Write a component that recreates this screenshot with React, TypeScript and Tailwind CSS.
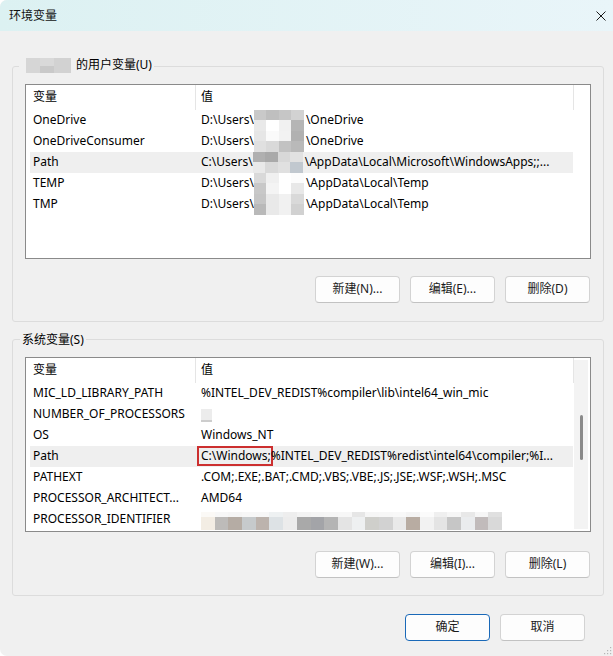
import React from "react"

type Row = { name: string; value: React.ReactNode; active?: boolean }

const ui = "font-['Segoe_UI','Noto_Sans','Microsoft_YaHei','Noto_Sans_CJK_SC',sans-serif]"

// redacted user name, 4 columns x 2 bands per row
const userMosaic = [
  ["#c9c9c9", "#bfbfbf", "#c6c6c6", "#d2d2d2", "#e9e9e9", "#ffffff", "#f1f1f1", "#b5b5b5"],
  ["#e6e6e6", "#fafafa", "#f2f2f2", "#b1b1b1", "#e0e0e0", "#d9d9d9", "#c2c2c2", "#b9b9b9"],
  ["#b0b0b0", "#a9a9a9", "#d8d8d8", "#e1e1e1", "#e9e9e9", "#d9d9d9", "#e0e0e0", "#c1c8cf"],
  ["#d9d9d9", "#f0f0f0", "#ffffff", "#fcfcfc", "#c8c8c8", "#f4f4f4", "#ffffff", "#e8e8e8"],
  ["#c5c5c5", "#e9e9e9", "#f1f1f1", "#d9d9d9", "#b9b9b9", "#e9e9e9", "#f1f1f1", "#d1d1d1"],
]

const idMosaic = [
  ["#fbf9f6", "#f3ede4"], ["#f7f7f7", "#bdbbb9"], ["#f5f5f5", "#b5aca4"], ["#f7f7f7", "#c6cacc"],
  ["#f7f7f7", "#bcb3ad"], ["#eef1f2", "#dde2e5"], ["#eeeeee", "#ececec"], ["#f3f3f3", "#a9a9a9"],
  ["#f5f5f5", "#a3a4a8"], ["#f6f6f6", "#b4b4b4"], ["#f7f7f7", "#e4e4e4"], ["#e6e6e6", "#eef0f1"],
  ["#f6f6f6", "#cfcfcb"], ["#f7f7f7", "#d2d2d2"], ["#f8f8f8", "#e9e9e9"], ["#f4f4f4", "#b8aca2"],
  ["#fbfbfb", "#f2f2f2"], ["#efefef", "#e4e4e4"], ["#f6f6f6", "#c6c6c6"], ["#e8e8e8", "#eaecee"],
  ["#f6f6f6", "#c1bbbb"], ["#e0e0e0", "#d9d9d9"],
]

function UserMosaic({ i }: { i: number }) {
  return (
    <div className="grid grid-cols-4 grid-rows-2 w-[50px] h-full shrink-0">
      {userMosaic[i].map((c, k) => (
        <div key={k} style={{ backgroundColor: c }} />
      ))}
    </div>
  )
}

function UserPath({ drive, i, tail }: { drive: string; i: number; tail: string }) {
  return (
    <>
      <span>{drive + ":\\Users\\"}</span>
      <UserMosaic i={i} />
      <span className="pl-[2px]">{tail}</span>
    </>
  )
}

const userRows: Row[] = [
  { name: "OneDrive", value: <UserPath drive="D" i={0} tail={"\\OneDrive"} /> },
  { name: "OneDriveConsumer", value: <UserPath drive="D" i={1} tail={"\\OneDrive"} /> },
  {
    name: "Path",
    value: <UserPath drive="C" i={2} tail={"\\AppData\\Local\\Microsoft\\WindowsApps;;..."} />,
    active: true,
  },
  { name: "TEMP", value: <UserPath drive="D" i={3} tail={"\\AppData\\Local\\Temp"} /> },
  { name: "TMP", value: <UserPath drive="D" i={4} tail={"\\AppData\\Local\\Temp"} /> },
]

const systemRows: Row[] = [
  { name: "MIC_LD_LIBRARY_PATH", value: "%INTEL_DEV_REDIST%compiler\\lib\\intel64_win_mic" },
  {
    name: "NUMBER_OF_PROCESSORS",
    value: <span className="inline-block w-[11px] h-[13px] mt-[2px] bg-[#ececec] border-b-2 border-[#cdcdcd]" />,
  },
  { name: "OS", value: "Windows_NT" },
  {
    name: "Path",
    value: (
      <>
        <span className="inline-block -ml-[4px] pl-[2px] -mr-[2px] border-2 border-[#cc2f2f] leading-[16px]">
          {"C:\\Windows;"}
        </span>
        <span>{"%INTEL_DEV_REDIST%redist\\intel64\\compiler;%I..."}</span>
      </>
    ),
    active: true,
  },
  { name: "PATHEXT", value: ".COM;.EXE;.BAT;.CMD;.VBS;.VBE;.JS;.JSE;.WSF;.WSH;.MSC" },
  { name: "PROCESSOR_ARCHITECT...", value: "AMD64" },
  {
    name: "PROCESSOR_IDENTIFIER",
    value: (
      <div className="flex h-[18px] mt-[3px]">
        {idMosaic.map(([top, main], k) => (
          <div key={k} className="flex flex-col w-[13.7px]">
            <div className="h-[5px]" style={{ backgroundColor: top }} />
            <div className="flex-1" style={{ backgroundColor: main }} />
          </div>
        ))}
      </div>
    ),
  },
]

function ListView({ rows, scroll }: { rows: Row[]; scroll?: boolean }) {
  return (
    <div className="h-[175px] w-[566px] border border-[#8a8a8a] bg-white flex overflow-hidden">
      <div className="flex flex-col pl-[4px]">
        <div className="h-[25px] flex items-center">
          <div className="w-[165px] pl-[3px]">变量</div>
          <div className="w-px h-full bg-[#e5e5e5]" />
          <div className="w-[377px] pl-[5px]">值</div>
          <div className="w-px h-full bg-[#e5e5e5]" />
        </div>
        {rows.map((r) => (
          <div
            key={r.name + String(r.active)}
            className={`h-[21px] w-[543px] flex items-center whitespace-pre ${r.active ? "bg-[#efefef]" : ""}`}
          >
            <div className="w-[166px] pl-[3px] overflow-hidden">{r.name}</div>
            <div className="w-[377px] h-full pl-[5px] flex items-center overflow-hidden">{r.value}</div>
          </div>
        ))}
      </div>
      {scroll && (
        <div className="flex-1 py-[2px] pr-[2px]">
          <div className="h-full bg-[#f3f3f3] flex flex-col items-center pt-[55px]">
            <div className="w-[3px] h-[45px] rounded-full bg-[#8a8a8a]" />
          </div>
        </div>
      )}
    </div>
  )
}

function Btn({ label, primary }: { label: string; primary?: boolean }) {
  return (
    <button
      className={`w-[85px] h-[27px] rounded-[4px] bg-[#fdfdfd] border text-[12px] text-[#1b1b1b] flex items-center justify-center ${
        primary ? "border-[#1a69b8]" : "border-[#d3d3d3] border-b-[#c2c2c2]"
      }`}
    >
      {label}
    </button>
  )
}

export default function App() {
  return (
    <div className={`${ui} w-[613px] h-[656px] bg-[#f0f0f0] text-[12px] leading-[16px] text-black flex flex-col overflow-hidden rounded-l-[7px]`}>
      <div className="h-[31px] shrink-0 flex items-center justify-between pl-[9px] pr-[7px] bg-gradient-to-r from-[#dcf1f2] to-[#e9f5f9]">
        <span className="text-[#111]">环境变量</span>
        <svg width="10" height="10" viewBox="0 0 10 10" className="mt-[1px]">
          <path d="M0.5 0.5L9.5 9.5M9.5 0.5L0.5 9.5" stroke="#1a1a1a" strokeWidth="1" />
        </svg>
      </div>

      <div className="pl-[12px] pr-[9px] pt-[26px] flex flex-col">
        <fieldset className="border border-[#dcdcdc] rounded-[3px] px-[12px] pb-[18px]">
          <legend className="-ml-[6px] px-[2px]">
            <span className="inline-flex items-center">
              <span className="ml-[5px] mr-[5px] w-[45px] h-[15px] flex">
                <span className="w-[14px] bg-[#d6d6d6]" />
                <span className="w-[14px] flex flex-col">
                  <span className="h-[8px] bg-[#d9d9d9]" />
                  <span className="flex-1 bg-[#c9c9c9]" />
                </span>
                <span className="flex-1 bg-[#d2d2d2]" />
              </span>
              的用户变量(U)
            </span>
          </legend>
          <div className="mt-[7px]">
            <ListView rows={userRows} />
          </div>
          <div className="flex justify-end gap-[10px] mt-[17px] pr-px">
            <Btn label="新建(N)..." />
            <Btn label="编辑(E)..." />
            <Btn label="删除(D)" />
          </div>
        </fieldset>

        <fieldset className="mt-[10px] border border-[#dcdcdc] rounded-[3px] px-[12px] pb-[17px]">
          <legend className="-ml-[5px] px-[2px]">系统变量(S)</legend>
          <div className="mt-[9px]">
            <ListView rows={systemRows} scroll />
          </div>
          <div className="flex justify-end gap-[10px] mt-[19px] pr-px">
            <Btn label="新建(W)..." />
            <Btn label="编辑(I)..." />
            <Btn label="删除(L)" />
          </div>
        </fieldset>

        <div className="flex justify-end gap-[10px] mt-[18px] pr-[19px]">
          <Btn label="确定" primary />
          <Btn label="取消" />
        </div>
      </div>

      <div className="flex-1 flex justify-end items-end pr-[1px] pb-[1px]">
        <svg width="8" height="8" viewBox="0 0 8 8">
          <rect x="6" y="0" width="1.2" height="1.2" fill="#b5b5b5" />
          <rect x="3" y="3" width="1.2" height="1.2" fill="#b5b5b5" />
          <rect x="6" y="3" width="1.2" height="1.2" fill="#b5b5b5" />
          <rect x="0" y="6" width="1.2" height="1.2" fill="#b5b5b5" />
          <rect x="3" y="6" width="1.2" height="1.2" fill="#b5b5b5" />
          <rect x="6" y="6" width="1.2" height="1.2" fill="#b5b5b5" />
        </svg>
      </div>
    </div>
  )
}
